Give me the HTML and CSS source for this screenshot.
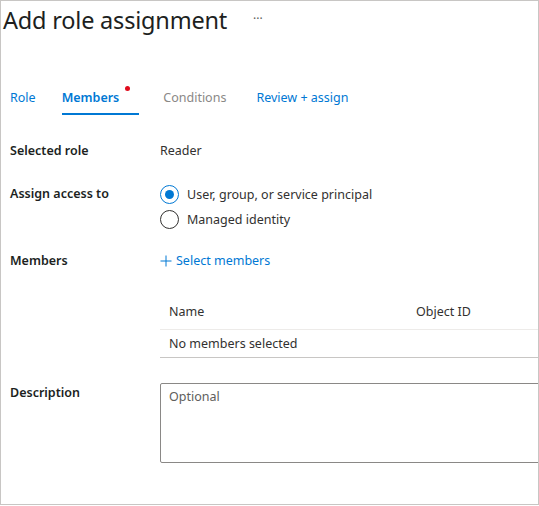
FILE: index.html
```html
<!DOCTYPE html>
<html>
<head>
<meta charset="utf-8">
<link rel="stylesheet" href="styles.css">
</head>
<body>
<div class="frame">
  <div class="header">
    <h1 class="title">Add role assignment</h1>
    <span class="more">···</span>
  </div>
  <nav class="tabs">
    <a class="tab t-role">Role</a>
    <a class="tab active">Members<span class="dot"></span></a>
    <a class="tab disabled">Conditions</a>
    <a class="tab">Review + assign</a>
  </nav>
  <div class="form">
    <div class="row r-role">
      <div class="label">Selected role</div>
      <div class="value">Reader</div>
    </div>
    <div class="row r-access">
      <div class="label">Assign access to</div>
      <div class="value radios">
        <label class="radio"><span class="circle checked"></span>User, group, or service principal</label>
        <label class="radio"><span class="circle"></span>Managed identity</label>
      </div>
    </div>
    <div class="row r-members">
      <div class="label">Members</div>
      <div class="value">
        <a class="select"><svg width="12" height="12" viewBox="0 0 12 12"><path d="M6 0.5V11.5M0.5 6H11.5" stroke="#0078d4" stroke-width="1" fill="none"/></svg>Select members</a>
      </div>
    </div>
    <div class="table">
      <div class="thead">
        <div class="c-name">Name</div>
        <div class="c-id">Object ID</div>
      </div>
      <div class="tbody">No members selected</div>
    </div>
    <div class="row r-desc">
      <div class="label">Description</div>
      <div class="value"><div class="textarea">Optional</div></div>
    </div>
  </div>
</div>
</body>
</html>
```

FILE: styles.css
```css
* { box-sizing: border-box; }
html, body { margin: 0; padding: 0; background: #fff; }
body {
  font-family: "Noto Sans", "Open Sans", sans-serif;
  font-size: 12.5px;
  color: #323130;
}
.frame {
  width: 539px;
  height: 505px;
  border: 1px solid #c8c6c4;
  overflow: hidden;
}
.header {
  display: flex;
  align-items: center;
  height: 38px;
  padding-left: 2px;
}
.title {
  margin: 0;
  font-size: 23.5px;
  font-weight: 400;
  color: #201f1e;
  letter-spacing: -0.2px;
}
.more {
  margin-left: 26px;
  font-size: 12px;
  color: #605e5c;
  margin-top: -4px;
}
.tabs {
  display: flex;
  margin-top: 48px;
  padding-left: 9px;
  height: 28px;
}
.tab {
  position: relative;
  color: #0078d4;
  height: 28px;
  line-height: 22px;
  margin-right: 27px;
}
.t-role { margin-right: 26px; }
.tab.active {
  font-weight: 600;
  border-bottom: 2px solid #0078d4;
  padding-right: 20px;
  margin-right: 24px;
}
.tab.disabled { color: #8a8886; margin-right: 30px; }
.dot {
  position: absolute;
  right: 9px;
  top: -1px;
  width: 5px;
  height: 5px;
  border-radius: 50%;
  background: #e00b1c;
}
.form { padding: 0 0 0 9px; }
.row {
  display: grid;
  grid-template-columns: 150px 1fr;
}
.label { font-weight: 600; color: #201f1e; }
.r-role { margin-top: 26px; line-height: 20px; }
.r-access { margin-top: 23px; }
.r-access .label { line-height: 20px; }
.radios { display: flex; flex-direction: column; gap: 5px; }
.radio { display: flex; align-items: center; height: 20px; }
.circle {
  width: 19px; height: 19px;
  border: 1px solid #323130;
  border-radius: 50%;
  margin-right: 8px;
  position: relative;
}
.circle.checked { border-color: #0078d4; }
.circle.checked::after {
  content: "";
  position: absolute;
  left: 4px; top: 4px;
  width: 9px; height: 9px;
  border-radius: 50%;
  background: #0078d4;
}
.r-members { margin-top: 22px; line-height: 20px; }
.select { color: #0078d4; display: inline-flex; align-items: center; gap: 4px; }
.table { margin-left: 150px; margin-top: 29px; }
.thead {
  display: flex;
  height: 28px;
  line-height: 20px;
  padding-left: 9px;
  border-bottom: 1px solid #edebe9;
}
.c-name { width: 247px; color: #323130; }
.tbody {
  height: 28px;
  line-height: 20px;
  padding-top: 4px;
  padding-left: 9px;
  border-bottom: 1px solid #c8c6c4;
}
.r-desc { margin-top: 25px; }
.r-desc .label { line-height: 20px; }
.textarea {
  height: 80px;
  margin-right: -20px;
  border: 1px solid #8a8886;
  border-radius: 2px;
  color: #605e5c;
  padding: 3px 8px;
  line-height: 19px;
}
```
